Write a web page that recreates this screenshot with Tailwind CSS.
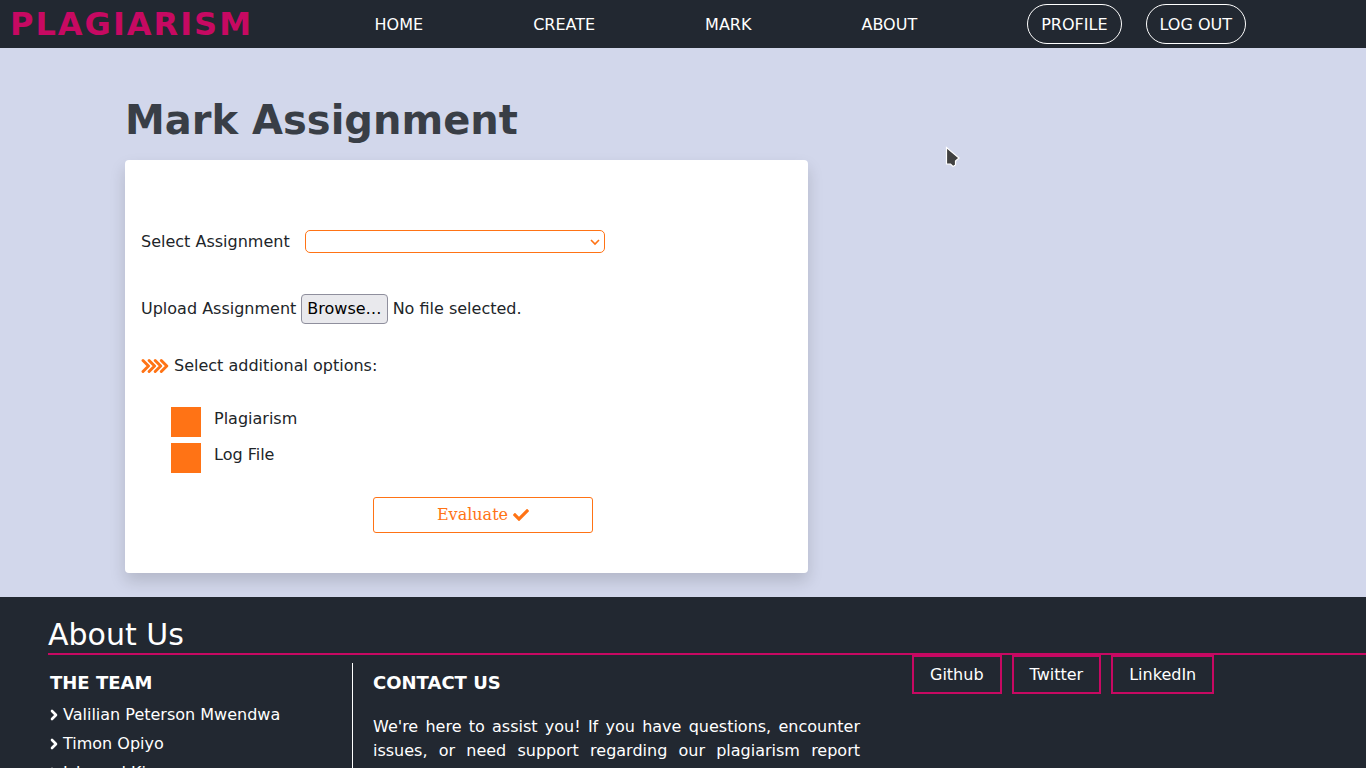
<!DOCTYPE html>
<html lang="en">
<head>
<meta charset="utf-8">
<meta name="viewport" content="width=device-width, initial-scale=1">
<title>Mark Assignment</title>
<script src="https://cdn.jsdelivr.net/npm/@tailwindcss/browser@4"></script>
</head>
<body class="bg-[#d2d7eb] font-['DejaVu_Sans',sans-serif] text-base text-[#212529] [scrollbar-width:none]">
<header class="flex h-12 items-center bg-[#222831] pl-2.5 text-white">
  <a href="#" class="text-[32px] leading-12 font-bold tracking-[2px] text-[#c70962]">PLAGIARISM</a>
  <nav class="mr-[120px] ml-auto flex items-center gap-[110px]">
    <a href="#" class="pt-0.5">HOME</a>
    <a href="#" class="pt-0.5">CREATE</a>
    <a href="#" class="pt-0.5">MARK</a>
    <a href="#" class="pt-0.5">ABOUT</a>
    <div class="flex gap-6">
      <a href="#" class="flex h-10 items-center rounded-full border border-white px-[13px] pt-0.5">PROFILE</a>
      <a href="#" class="flex h-10 items-center rounded-full border border-white px-[13px] pt-0.5">LOG OUT</a>
    </div>
  </nav>
</header>

<main class="px-[125px] pt-12 pb-6">
  <h1 class="mb-4 text-[40px] leading-12 font-bold text-[#393e46]">Mark Assignment</h1>
  <form class="flex w-[683px] max-w-full flex-col rounded bg-white px-4 pt-[68px] pb-10 shadow-[0_8px_16px_rgba(0,0,0,0.15)]">
    <div class="flex items-center">
      <label for="assignment" class="w-[164px] pt-0.5">Select Assignment</label>
      <div class="relative">
        <select id="assignment" class="block h-[23px] w-[300px] appearance-none rounded-[5px] border border-[#ff7315] bg-white text-[#ff7315]"><option></option></select>
        <svg class="pointer-events-none absolute top-2 right-[5px] h-2 w-2.5" viewBox="0 0 10 8" fill="none" stroke="#ff7315" stroke-width="1.6"><path d="M1 2l4 4 4-4"/></svg>
      </div>
    </div>
    <div class="mt-10 flex items-center gap-[5px]">
      <label for="upload">Upload Assignment</label>
      <input id="upload" type="file" class="peer sr-only">
      <label for="upload" class="rounded border border-[#8f8f9d] bg-[#e9e9ed] px-[5px] py-0.5 text-black">Browse…</label>
      <span>No file selected.</span>
    </div>
    <div class="mt-[30px] flex items-center gap-[5px]">
      <svg class="h-4 w-7" viewBox="0 0 28 16" fill="none" stroke="#ff7315" stroke-width="2.9" stroke-linecap="round" stroke-linejoin="round"><path d="M2 2.500l5.500 5.500-5.500 5.500M8.100 2.500l5.500 5.500-5.500 5.500M14.200 2.500l5.500 5.500-5.500 5.500M20.300 2.500l5.500 5.500-5.500 5.500"/></svg>
      <p>Select additional options:</p>
    </div>
    <div class="mt-[29px] flex flex-col gap-1.5 pl-[30px]">
      <div class="flex gap-[13px]">
        <input id="plagiarism" type="checkbox" class="size-[30px] appearance-none bg-[#ff7315]">
        <label for="plagiarism">Plagiarism</label>
      </div>
      <div class="flex gap-[13px]">
        <input id="logfile" type="checkbox" class="size-[30px] appearance-none bg-[#ff7315]">
        <label for="logfile">Log File</label>
      </div>
    </div>
    <button type="submit" class="mt-6 ml-[232px] flex h-9 w-[220px] items-center justify-center gap-[5px] rounded-[3px] border border-[#ff7315] bg-white font-['DejaVu_Serif',serif] text-[#ff7315]">Evaluate
      <svg class="size-4" viewBox="0 0 512 512" fill="currentColor"><path d="M173.898 439.404l-166.400-166.400c-9.997-9.997-9.997-26.206 0-36.204l36.203-36.204c9.997-9.998 26.207-9.998 36.204 0L192 312.690 432.095 72.596c9.997-9.997 26.207-9.997 36.204 0l36.203 36.204c9.997 9.997 9.997 26.206 0 36.204l-294.400 294.401c-9.998 9.997-26.207 9.997-36.204-.001z"/></svg>
    </button>
  </form>
</main>

<footer class="bg-[#222831] pt-5 pb-8 pl-12 text-white">
  <h2 class="border-b-2 border-[#c70962] text-[30px] leading-9">About Us</h2>
  <div class="flex items-start">
    <section class="mt-2 w-[305px] shrink-0 border-r border-white pb-4 pl-0.5">
      <h3 class="pt-2 text-lg leading-6 font-bold">THE TEAM</h3>
      <ul class="mt-[5px]">
        <li><a href="#" class="flex h-[29px] items-center gap-[5px]"><svg class="h-3 w-2" viewBox="0 0 8 12" fill="none" stroke="currentColor" stroke-width="2.6" stroke-linecap="round" stroke-linejoin="round"><path d="M2 2l4 4-4 4"/></svg>Valilian Peterson Mwendwa</a></li>
        <li><a href="#" class="flex h-[29px] items-center gap-[5px]"><svg class="h-3 w-2" viewBox="0 0 8 12" fill="none" stroke="currentColor" stroke-width="2.6" stroke-linecap="round" stroke-linejoin="round"><path d="M2 2l4 4-4 4"/></svg>Timon Opiyo</a></li>
        <li><a href="#" class="flex h-[29px] items-center gap-[5px]"><svg class="h-3 w-2" viewBox="0 0 8 12" fill="none" stroke="currentColor" stroke-width="2.6" stroke-linecap="round" stroke-linejoin="round"><path d="M2 2l4 4-4 4"/></svg>Ishmael Kip</a></li>
      </ul>
    </section>
    <section class="mt-2 ml-5 w-[487px]">
      <h3 class="pt-2 text-lg leading-6 font-bold">CONTACT US</h3>
      <p class="mt-5 text-justify">We're here to assist you! If you have questions, encounter issues, or need support regarding our plagiarism report service</p>
    </section>
    <div class="ml-[52px] flex gap-2.5">
      <a href="#" class="border-2 border-[#c70962] px-4 pt-1.5 pb-[5px]">Github</a>
      <a href="#" class="border-2 border-[#c70962] px-4 pt-1.5 pb-[5px]">Twitter</a>
      <a href="#" class="border-2 border-[#c70962] px-4 pt-1.5 pb-[5px]">LinkedIn</a>
    </div>
  </div>
</footer>
<!-- Mouse pointer -->
<svg class="pointer-events-none absolute top-[146px] left-[945px] h-[22px] w-4" viewBox="0 0 16 22" fill="#414141" stroke="#fff" stroke-width="1.2" aria-hidden="true"><path d="M1.500 1.500v16.500h4l2.500 2.500 2.500-1.500v-4l3.500-3z"/></svg>
</body>
</html>
